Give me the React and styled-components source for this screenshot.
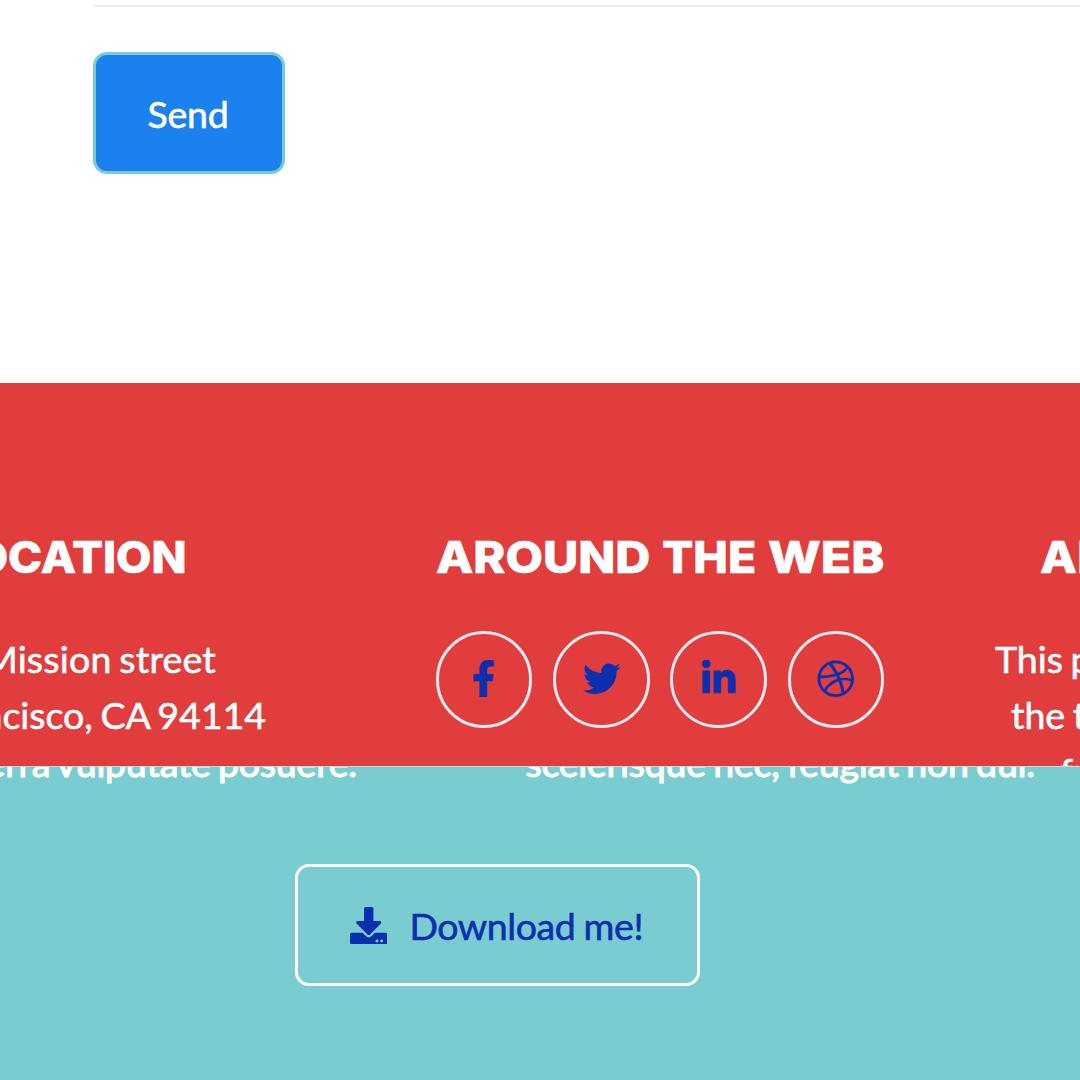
import React from "react";
import styled, { createGlobalStyle } from "styled-components";
import { FaFacebookF, FaTwitter, FaLinkedinIn, FaDribbble, FaDownload } from "react-icons/fa";

const GlobalStyle = createGlobalStyle`
  *, *::before, *::after { box-sizing: border-box; }
  body { margin: 0; background: #fff; }
`;

const Page = styled.div`
  width: 1080px;
  height: 1080px;
  overflow: hidden;
  display: flex;
  flex-direction: column;
  font-family: Lato, "Liberation Sans", sans-serif;
  font-size: 37.5px;
  line-height: 56px;
  color: #fff;
  -webkit-text-stroke: 0.6px currentColor;
`;

const ContactSection = styled.section`
  height: 383px;
  flex: none;
  padding: 5px 0 0 93px;
  background: #fff;
`;

const Divider = styled.hr`
  height: 2px;
  margin: 0 0 45px;
  border: 0;
  background: #eeeef3;
`;

const Button = styled.button`
  display: flex;
  align-items: center;
  justify-content: center;
  gap: ${(p) => p.$gap || 0}px;
  width: ${(p) => p.$width}px;
  height: ${(p) => p.$height}px;
  padding: ${(p) => p.$drop || 0}px 2px 0 0;
  border: 3px solid ${(p) => p.$edge};
  border-radius: 14px;
  background: ${(p) => p.$fill};
  color: ${(p) => p.$ink};
  font: inherit;
  letter-spacing: ${(p) => p.$tracking || 0}px;
  word-spacing: -1px;
  white-space: nowrap;
  -webkit-text-stroke: 0.6px currentColor;
  svg { width: 37.5px; height: 37.5px; flex: none; }
`;

const Footer = styled.footer`
  height: 383px;
  flex: none;
  display: grid;
  grid-template-columns: 365px 590px 125px;
  padding-top: 146px;
  overflow: hidden;
  background: #e13d3d;
`;

const Column = styled.div`
  display: flex;
  flex-direction: column;
  align-items: ${(p) => p.$align};
  white-space: nowrap;
  min-width: 0;
`;

const Heading = styled.h4`
  display: flex;
  margin: 0 ${(p) => p.$right || 0}px 46px ${(p) => p.$left || 0}px;
  font-family: Inter, "Liberation Sans", sans-serif;
  font-size: 44.5px;
  font-weight: 800;
  line-height: 56px;
`;

const Word = styled.span`
  display: block;
  width: ${(p) => (p.$width ? `${p.$width}px` : "auto")};
  transform: scaleX(${(p) => p.$stretch});
  transform-origin: ${(p) => p.$origin || "left"} center;
`;

const Line = styled.div`
  margin: 0 ${(p) => p.$right || 0}px 0 ${(p) => p.$left || 0}px;
  letter-spacing: ${(p) => p.$tracking || 0}px;
  word-spacing: -2px;
`;

const Socials = styled.nav`
  display: flex;
  gap: 20.8px;
`;

const SocialLink = styled.a`
  display: flex;
  align-items: center;
  justify-content: center;
  width: 96.5px;
  height: 96.5px;
  padding-bottom: 2px;
  border: 3px solid #fbeaf0;
  border-radius: 50%;
  color: #0c2fb0;
  svg {
    width: 37.5px;
    height: 37.5px;
    stroke: currentColor;
    stroke-width: ${(p) => p.$weight}px;
  }
`;

const AboutSection = styled.section`
  flex: 1;
  border-top: 1px solid #b5dfe2;
  background: #79cdd1;
  overflow: hidden;
`;

const Copy = styled.div`
  display: flex;
  justify-content: space-between;
  height: 55px;
  margin: -32px 45px 74px 0;
  white-space: nowrap;
  word-spacing: -2px;
  -webkit-text-stroke: 1.1px currentColor;
`;

const CopyText = styled.p`
  margin: 0;
  width: ${(p) => p.$width}px;
  display: flex;
  justify-content: flex-end;
  letter-spacing: -0.22px;
`;

const DownloadRow = styled.div`
  padding-left: 295px;
`;

export default function App() {
  return (
    <Page>
      <GlobalStyle />
      <ContactSection>
        <Divider />
        <Button $width={192} $height={122} $drop={2} $tracking={-0.3} $edge="#79cdd1" $fill="#1b81ef" $ink="#fff">
          Send
        </Button>
      </ContactSection>
      <Footer>
        <Column $align="flex-end">
          <Heading $right={178}>
            <Word $stretch={1.03} $origin="right">LOCATION</Word>
          </Heading>
          <Line $right={149} $tracking={0.2}>Mission street</Line>
          <Line $right={99}>Francisco, CA 94114</Line>
        </Column>
        <Column $align="center">
          <Heading>
            <Word $stretch={1.09} $width={226}>AROUND</Word>
            <Word $stretch={1.04} $width={106}>THE</Word>
            <Word $stretch={1.12} $width={116}>WEB</Word>
          </Heading>
          <Socials>
            <SocialLink $weight={5}><FaFacebookF /></SocialLink>
            <SocialLink $weight={0}><FaTwitter /></SocialLink>
            <SocialLink $weight={12}><FaLinkedinIn /></SocialLink>
            <SocialLink $weight={2}><FaDribbble /></SocialLink>
          </Socials>
        </Column>
        <Column $align="flex-start">
          <Heading $left={85}>
            <Word $stretch={1.08}>AB</Word>
          </Heading>
          <Line $left={40}>This p</Line>
          <Line $left={56}>the t</Line>
          <Line $left={105}>fr</Line>
        </Column>
      </Footer>
      <AboutSection>
        <Copy>
          <CopyText $width={357}>viverra vulputate posuere.</CopyText>
          <CopyText $width={510}>scelerisque nec, feugiat non dui.</CopyText>
        </Copy>
        <DownloadRow>
          <Button $width={405} $height={122} $drop={1} $gap={22} $tracking={-0.42} $edge="#fff" $fill="transparent" $ink="#0c2fb0">
            <FaDownload />
            Download me!
          </Button>
        </DownloadRow>
      </AboutSection>
    </Page>
  );
}
